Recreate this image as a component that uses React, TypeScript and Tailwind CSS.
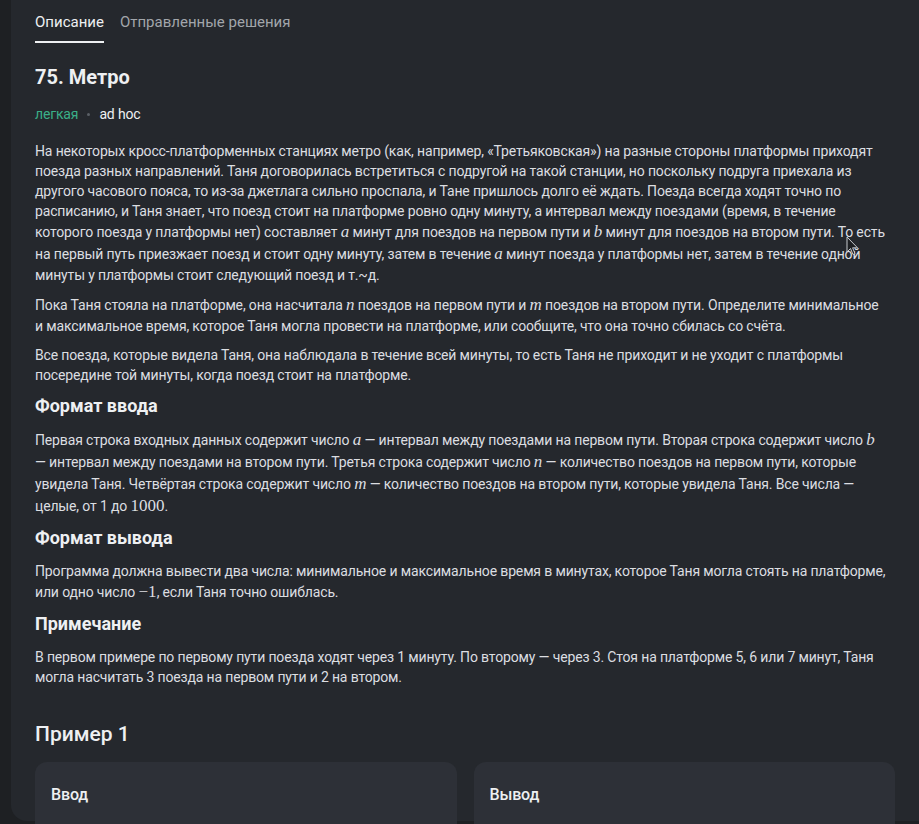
import type { ReactNode } from "react";

function M({ children, italic = true }: { children: ReactNode; italic?: boolean }) {
  return (
    <span
      className={`text-[17px] leading-[22px] tracking-normal ${italic ? "italic" : ""}`}
      style={{ fontFamily: '"Liberation Serif", serif' }}
    >
      {children}
    </span>
  );
}

function P({ children }: { children: ReactNode }) {
  return <p className="mb-[9px] leading-5">{children}</p>;
}

function H({ children }: { children: ReactNode }) {
  return <h3 className="mt-[4px] mb-[11px] text-[18px] font-bold leading-6 tracking-normal text-[#eef0f2]">{children}</h3>;
}

function Cursor() {
  return (
    <svg className="absolute left-[846px] top-[236px]" width="13" height="20" viewBox="0 0 13 20">
      <path d="M1 1 L1 16 L4.5 12.5 L7 18.5 L9 17.6 L6.6 11.8 L11.5 11.8 Z" fill="#1d1f22" stroke="#c8cbcf" strokeWidth="1" strokeLinejoin="round" />
    </svg>
  );
}

export default function App() {
  return (
    <div
      className="relative h-[824px] w-[919px] overflow-hidden bg-[#1e2023] text-[14px] tracking-[-0.15px] text-[#dcdee1]"
      style={{ fontFamily: "Roboto, sans-serif" }}
    >
      <div className="ml-[11px] mr-[-20px] h-[821px] rounded-b-2xl bg-[#25282d] pl-[24px] pr-[44px]">
        <div className="flex gap-4 pt-[11px] text-[15px] tracking-normal">
          <div className="border-b-2 border-[#eef0f2] pb-[7px] text-[#eef0f2]">Описание</div>
          <div className="text-[#a2a6ab]">Отправленные решения</div>
        </div>

        <h1 className="mt-[20px] text-[20px] font-bold leading-7 tracking-normal text-[#eef0f2]">75. Метро</h1>

        <div className="mt-[13px] flex items-center gap-[9px] text-[14px]">
          <span className="text-[#3aaf88]">легкая</span>
          <span className="h-[3px] w-[3px] rounded-full bg-[#5b6066]" />
          <span className="text-[#eef0f2]">ad hoc</span>
        </div>

        <div className="mt-[16px]">
          <P>
            На некоторых кросс-платформенных станциях метро (как, например, «Третьяковская») на разные стороны платформы приходят
            поезда разных направлений. Таня договорилась встретиться с подругой на такой станции, но поскольку подруга приехала из
            другого часового пояса, то из-за джетлага сильно проспала, и Тане пришлось долго её ждать. Поезда всегда ходят точно по
            расписанию, и Таня знает, что поезд стоит на платформе ровно одну минуту, а интервал между поездами (время, в течение
            которого поезда у платформы нет) составляет <M>a</M> минут для поездов на первом пути и <M>b</M> минут для поездов на
            втором пути. То есть на первый путь приезжает поезд и стоит одну минуту, затем в течение <M>a</M> минут поезда у платформы
            нет, затем в течение одной минуты у платформы стоит следующий поезд и т.~д.
          </P>
          <P>
            Пока Таня стояла на платформе, она насчитала <M>n</M> поездов на первом пути и <M>m</M> поездов на втором пути.
            Определите минимальное и{"\u00a0"}максимальное время, которое Таня могла провести на платформе, или сообщите, что она
            точно сбилась со счёта.
          </P>
          <P>
            Все поезда, которые видела Таня, она наблюдала в течение всей минуты, то есть Таня не приходит и не уходит с платформы
            посередине той минуты, когда поезд стоит на платформе.
          </P>

          <H>Формат ввода</H>
          <P>
            Первая строка входных данных содержит число <M>a</M> — интервал между поездами на первом пути. Вторая строка содержит
            число <M>b</M> —{"\u00a0"}интервал между поездами на втором пути. Третья строка содержит число <M>n</M> — количество
            поездов на первом пути, которые увидела Таня. Четвёртая строка содержит число <M>m</M> — количество поездов на втором
            пути, которые увидела Таня. Все числа — целые, от 1 до <M italic={false}>1000</M>.
          </P>

          <H>Формат вывода</H>
          <P>
            Программа должна вывести два числа: минимальное и максимальное время в минутах, которое Таня могла стоять на платформе,
            или одно число <M italic={false}>−1</M>, если Таня точно ошиблась.
          </P>

          <H>Примечание</H>
          <P>
            В первом примере по первому пути поезда ходят через 1 минуту. По второму — через 3. Стоя на платформе 5, 6 или 7 минут,
            Таня могла насчитать 3 поезда на первом пути и 2 на втором.
          </P>
        </div>

        <h2 className="mt-[33px] text-[21px] font-medium leading-7 tracking-normal text-[#eef0f2]">Пример 1</h2>

        <div className="mt-[14px] grid h-[120px] w-[860px] grid-cols-2 gap-[17px]">
          <div className="rounded-xl bg-[#2d3037] px-[16px] pt-[21px]">
            <div className="text-[16px] font-medium text-[#eef0f2]">Ввод</div>
            <div className="mt-[14px] font-mono text-[14px]">1</div>
          </div>
          <div className="rounded-xl bg-[#2d3037] px-[16px] pt-[21px]">
            <div className="text-[16px] font-medium text-[#eef0f2]">Вывод</div>
            <div className="mt-[14px] font-mono text-[14px]">5 7</div>
          </div>
        </div>
      </div>
      <Cursor />
    </div>
  );
}
